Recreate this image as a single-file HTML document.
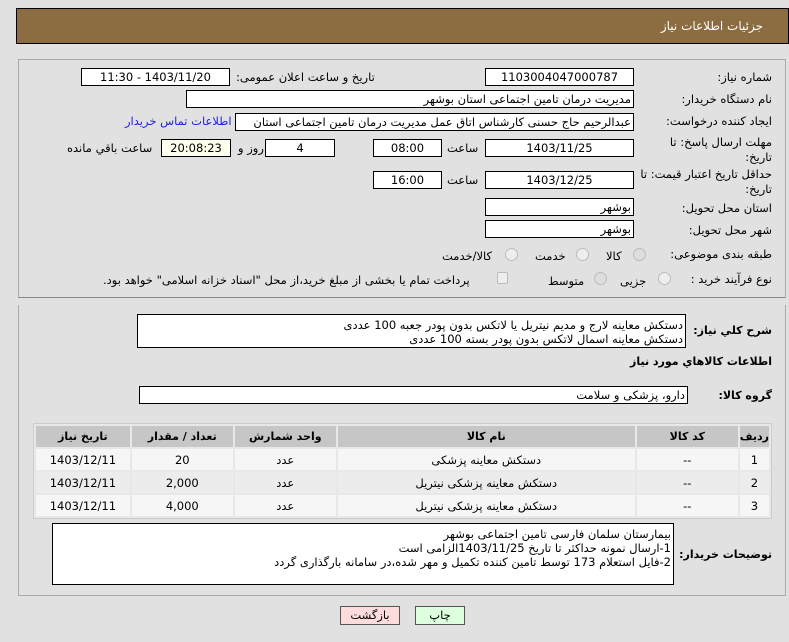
<!DOCTYPE html>
<html><head><meta charset="utf-8"><style>
*{box-sizing:border-box;margin:0;padding:0}
body{width:789px;height:642px;background:#e1e1e1;font-family:"DejaVu Sans","Liberation Sans",sans-serif;font-size:11.5px;color:#000;position:relative;overflow:hidden}
.a{position:absolute;white-space:nowrap}
.l{direction:rtl;text-align:right}
.in{position:absolute;background:#fff;border:1px solid #000;direction:rtl;text-align:right;padding:1px 2px;white-space:nowrap;overflow:hidden;line-height:15px}
.c{text-align:center}
.b{font-weight:bold}
.rad{position:absolute;width:13px;height:13px;border-radius:50%;border:1px solid #bbb;background:#eee}
table{position:absolute;left:33px;top:423px;width:739px;border-collapse:separate;border-spacing:2px;background:#e8e8e8;border:1px solid #ccc}
td,th{text-align:center;height:21px;direction:rtl;font-size:11.5px}
th{background:#c6c6c6;font-weight:bold;font-size:11px}
tr.r1 td{background:#f6f6f6}tr.r2 td{background:#ececec}
</style></head><body>
<div class="a" style="left:16px;top:8px;width:773px;height:36px;background:#8c6c41;border:1px solid #000"></div>
<div class="a l" style="right:26px;top:19px;color:#fff;font-size:12px">جزئیات اطلاعات نیاز</div>

<div class="a" style="left:18px;top:59px;width:768px;height:239px;border:1px solid #aaa;border-bottom:1px solid #888"></div>
<div class="a" style="left:18px;top:305px;width:768px;height:291px;border:1px solid #aaa;border-top:none"></div>

<div class="a l" style="right:17px;top:70px">شماره نیاز:</div>
<div class="in c" style="left:485px;top:68px;width:149px;height:18px;text-align:center">1103004047000787</div>
<div class="a l" style="left:236px;top:70px">تاریخ و ساعت اعلان عمومی:</div>
<div class="in" style="left:81px;top:68px;width:149px;height:18px;text-align:center">1403/11/20 - 11:30</div>

<div class="a l" style="right:17px;top:92px">نام دستگاه خریدار:</div>
<div class="in" style="left:186px;top:90px;width:448px;height:18px">مدیریت درمان تامین اجتماعی استان بوشهر</div>

<div class="a l" style="right:17px;top:114px">ایجاد کننده درخواست:</div>
<div class="in" style="left:235px;top:113px;width:399px;height:18px">عبدالرحیم حاج حسنی کارشناس اتاق عمل مدیریت درمان تامین اجتماعی استان</div>
<div class="a l" style="left:125px;top:114px;color:#2222dd">اطلاعات تماس خریدار</div>

<div class="a l" style="right:17px;top:135px">مهلت ارسال پاسخ: تا</div>
<div class="a l" style="right:17px;top:150px">تاریخ:</div>
<div class="in" style="left:485px;top:139px;width:149px;height:18px;text-align:center">1403/11/25</div>
<div class="a l" style="left:447px;top:141px">ساعت</div>
<div class="in" style="left:373px;top:139px;width:69px;height:18px;text-align:center">08:00</div>
<div class="in" style="left:265px;top:139px;width:70px;height:18px;text-align:center">4</div>
<div class="a l" style="left:238px;top:141px">روز و</div>
<div class="in" style="left:161px;top:139px;width:70px;height:18px;text-align:center;background:#ffffee">20:08:23</div>
<div class="a l" style="left:67px;top:141px">ساعت باقي مانده</div>

<div class="a l" style="right:17px;top:167px">حداقل تاریخ اعتبار قیمت: تا</div>
<div class="a l" style="right:17px;top:182px">تاریخ:</div>
<div class="in" style="left:485px;top:171px;width:149px;height:18px;text-align:center">1403/12/25</div>
<div class="a l" style="left:447px;top:173px">ساعت</div>
<div class="in" style="left:373px;top:171px;width:69px;height:18px;text-align:center">16:00</div>

<div class="a l" style="right:17px;top:201px">استان محل تحویل:</div>
<div class="in" style="left:485px;top:198px;width:149px;height:18px">بوشهر</div>
<div class="a l" style="right:17px;top:223px">شهر محل تحویل:</div>
<div class="in" style="left:485px;top:220px;width:149px;height:18px">بوشهر</div>

<div class="a l" style="right:17px;top:247px">طبقه بندی موضوعی:</div>
<div class="rad" style="left:633px;top:248px;background:#ddd"></div>
<div class="a l" style="left:606px;top:249px">کالا</div>
<div class="rad" style="left:576px;top:248px"></div>
<div class="a l" style="left:535px;top:249px">خدمت</div>
<div class="rad" style="left:505px;top:248px"></div>
<div class="a l" style="left:442px;top:249px">کالا/خدمت</div>

<div class="a l" style="right:17px;top:272px">نوع فرآیند خرید :</div>
<div class="rad" style="left:658px;top:272px"></div>
<div class="a l" style="left:620px;top:274px">جزیی</div>
<div class="rad" style="left:594px;top:272px;background:#ddd"></div>
<div class="a l" style="left:548px;top:274px">متوسط</div>
<div class="a" style="left:497px;top:272px;width:11px;height:12px;border:1px solid #bbb;background:#eee;border-radius:2px"></div>
<div class="a l" style="left:103px;top:273px">پرداخت تمام یا بخشی از مبلغ خرید،از محل "اسناد خزانه اسلامی" خواهد بود.</div>

<div class="a l b" style="right:17px;top:324px;font-size:11px">شرح کلي نياز:</div>
<div class="in" style="left:137px;top:314px;width:549px;height:34px;line-height:14px;padding-top:3px">دستکش معاینه لارج و مدیم نیتریل یا لاتکس بدون پودر جعبه 100 عددی<br>دستکش معاینه اسمال لاتکس بدون پودر بسته 100 عددی</div>
<div class="a l b" style="right:17px;top:355px;font-size:11px">اطلاعات کالاهاي مورد نياز</div>
<div class="a l b" style="right:17px;top:389px;font-size:11px">گروه کالا:</div>
<div class="in" style="left:139px;top:386px;width:549px;height:18px">دارو، پزشکی و سلامت</div>

<table dir="rtl">
<tr><th style="width:27px">ردیف</th><th style="width:101px">کد کالا</th><th style="width:297px">نام کالا</th><th style="width:101px">واحد شمارش</th><th style="width:101px">تعداد / مقدار</th><th>تاریخ نیاز</th></tr>
<tr class="r1"><td>1</td><td>--</td><td>دستکش معاینه پزشکی</td><td>عدد</td><td>20</td><td>1403/12/11</td></tr>
<tr class="r2"><td>2</td><td>--</td><td>دستکش معاینه پزشکی نیتریل</td><td>عدد</td><td>2,000</td><td>1403/12/11</td></tr>
<tr class="r1"><td>3</td><td>--</td><td>دستکش معاینه پزشکی نیتریل</td><td>عدد</td><td>4,000</td><td>1403/12/11</td></tr>
</table>

<div class="a l b" style="right:17px;top:548px;font-size:11px">توضیحات خریدار:</div>
<div class="in" style="left:52px;top:523px;width:622px;height:62px;line-height:14px;padding-top:3px">بیمارستان سلمان فارسی تامین اجتماعی بوشهر<br>1-ارسال نمونه حداکثر تا تاریخ 1403/11/25الزامی است<br>2-فایل استعلام 173 توسط تامین کننده تکمیل و مهر شده،در سامانه بارگذاری گردد</div>

<div class="a c" style="left:340px;top:606px;width:60px;height:19px;background:#ffdcdc;border:1px solid #555;line-height:17px">بازگشت</div>
<div class="a c" style="left:415px;top:606px;width:50px;height:19px;background:#ddffdd;border:1px solid #555;line-height:17px">چاپ</div>
</body></html>
